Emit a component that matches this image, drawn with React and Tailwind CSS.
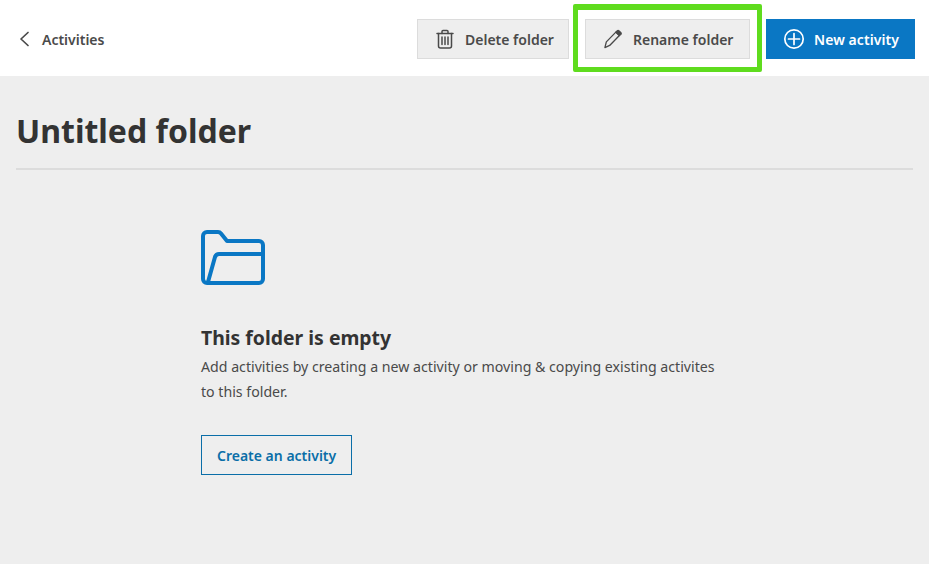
import React from 'react';

const FONT = "font-['Noto_Sans','Open_Sans',sans-serif]";

const TrashIcon = () => (
  <svg width="20" height="20" viewBox="0 0 20 20" fill="none" stroke="#4a4a4a" strokeWidth="1.5" strokeLinecap="round" strokeLinejoin="round">
    <path d="M2 4.5 H18" />
    <path d="M7 4.5 V2.5 a1 1 0 0 1 1 -1 H12 a1 1 0 0 1 1 1 V4.5" />
    <path d="M3.5 4.5 V17 a2 2 0 0 0 2 2 H14.5 a2 2 0 0 0 2 -2 V4.5" />
    <path d="M7 8 V15.5 M10 8 V15.5 M13 8 V15.5" />
  </svg>
);

const PencilIcon = () => (
  <svg width="20" height="20" viewBox="0 0 21 20" fill="none" stroke="#4a4a4a" strokeWidth="1.4" strokeLinejoin="round" strokeLinecap="round">
    <path d="M3.5 13 L13.5 2.8 L17.2 6.4 L7 16.8 L2 19 Z" />
    <path d="M14.8 1.5 a1.5 1.5 0 0 1 2.1 0 L18.6 3.1 a1.5 1.5 0 0 1 0 2.1 L17.2 6.4 L13.5 2.8 Z" fill="#4a4a4a" />
  </svg>
);

const PlusCircleIcon = () => (
  <svg width="24" height="24" viewBox="0 0 24 24" fill="none" stroke="white" strokeWidth="1.7" strokeLinecap="round">
    <circle cx="12" cy="12" r="9.2" />
    <path d="M12 6.5 V17.5 M6.5 12 H17.5" />
  </svg>
);

const GreyButton = ({ icon, label, className }) => (
  <button className={`flex h-10 items-center gap-[10px] border border-[#dcdcdc] bg-[#eeeeee] pl-[17px] text-[14px] font-semibold text-[#4a4a4a] ${className}`}>
    {icon}
    {label}
  </button>
);

const App = () => {
  return (
    <div className={`flex h-[564px] w-[929px] flex-col overflow-hidden bg-[#eeeeee] ${FONT}`}>
      <header className="flex h-[76px] items-center justify-between bg-white pl-[19px] pr-[14px] pt-[2px]">
        <div className="flex items-center gap-[12px] text-[14px] font-semibold text-[#4a4a4a]">
          <svg width="11" height="16" viewBox="0 0 11 16" fill="none" stroke="#4a4a4a" strokeWidth="1.7" strokeLinecap="round" strokeLinejoin="round">
            <path d="M9 1.5 L2 8 L9 14.5" />
          </svg>
          Activities
        </div>
        <div className="flex items-center">
          <GreyButton icon={<TrashIcon />} label="Delete folder" className="w-[152px]" />
          <div className="relative ml-[16px] mr-[16px]">
            <GreyButton icon={<PencilIcon />} label="Rename folder" className="w-[165px]" />
            <div className="absolute -bottom-[13px] -left-[12px] -right-[12px] -top-[15px] rounded-[2px] border-[5px] border-t-[6px] border-[#5fdc1e]"></div>
          </div>
          <button className="flex h-10 w-[149px] items-center gap-[8px] bg-[#0a77c4] pl-[16px] text-[14px] font-semibold tracking-[0.08px] text-white">
            <PlusCircleIcon />
            New activity
          </button>
        </div>
      </header>
      <main className="flex-1 px-[16px]">
        <h1 className="border-b-2 border-[#dcdcdc] pb-[15px] pt-[33px] text-[32px] font-bold leading-[44px] text-[#333333]">Untitled folder</h1>
        <section className="ml-[185px] mt-[60px] w-[522px]">
          <svg className="block" width="64" height="55" viewBox="0 0 64 55" fill="none" stroke="#0a77c4" strokeWidth="4" strokeLinejoin="round" strokeLinecap="round">
            <path d="M6 53 a4 4 0 0 1 -4 -4 V6 a4 4 0 0 1 4 -4 H17 a4 4 0 0 1 3 1.5 L26 11 H58 a4 4 0 0 1 4 4 V49 a4 4 0 0 1 -4 4 Z" />
            <path d="M7 52 L14 27 Q15 24 18 24 H62" />
          </svg>
          <h2 className="mt-[39px] text-[19.4px] font-bold leading-[28px] text-[#333333]">This folder is empty</h2>
          <p className="mt-[2px] text-[14.17px] leading-[25px] text-[#4a4a4a]">Add activities by creating a new activity or moving &amp; copying existing activites to this folder.</p>
          <button className="mt-[31px] h-10 border border-[#0a6ea8] bg-transparent px-[15px] text-[14px] font-semibold text-[#0a6ea8]">Create an activity</button>
        </section>
      </main>
    </div>
  );
};

export default App;
